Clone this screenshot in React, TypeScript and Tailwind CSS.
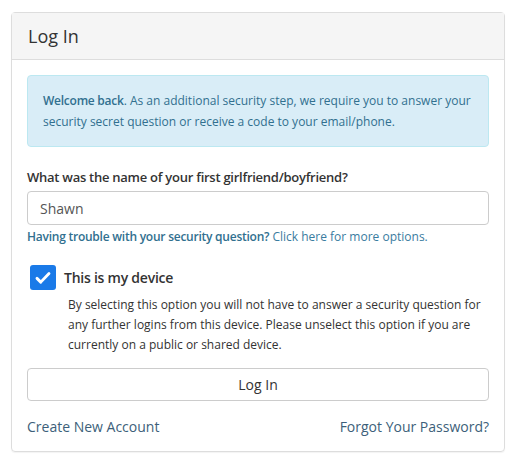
export default function App() {
  return (
    <div className="min-h-screen bg-white pt-[12px] pl-[11px] font-['Open_Sans',sans-serif] text-[#333]">
      <div className="w-[494px] rounded-[4px] border border-[#ddd] shadow-[0_1px_1px_rgba(0,0,0,0.05)]">
        <div className="flex h-[47px] items-center border-b border-[#ddd] bg-[#f5f5f5] px-[16px] text-[18px] text-[#333]">
          Log In
        </div>
        <div className="px-[15px] pt-[15px] pb-[14px]">
          <div className="rounded-[4px] border border-[#bce8f1] bg-[#d9edf7] pl-[15px] pr-[8px] py-[14px] text-[12px] leading-[21px] text-[#31708f]">
            <b className="font-semibold tracking-[-0.25px]">Welcome back</b>. As an additional security step, we require you to answer your security
            secret question or receive a code to your email/phone.
          </div>

          <label className="mt-[21px] block text-[13px] font-semibold leading-[18px] tracking-[-0.26px] text-[#333]">
            What was the name of your first girlfriend/boyfriend?
          </label>
          <input
            defaultValue="Shawn"
            className="mt-[5px] block h-[34px] w-full rounded-[4px] border border-[#ccc] px-[12px] text-[14px] text-[#555] outline-none"
          />
          <p className="mt-[3px] text-[12px] leading-[18px] text-[#31708f]">
            <span className="font-semibold tracking-[-0.24px]">Having trouble with your security question?</span>{' '}
            <a className="text-[#3a7ca0]">Click here for more options.</a>
          </p>

          <div className="mt-[19px] flex items-center gap-[8px] pl-[3px]">
            <span className="flex h-[25px] w-[26px] items-center justify-center rounded-[3px] bg-[#1a7ae8]">
              <svg width="18" height="18" viewBox="0 0 24 24" fill="none" stroke="white" strokeWidth="3.8" strokeLinecap="round" strokeLinejoin="round">
                <path d="M4 12.5l5 5L20 6" />
              </svg>
            </span>
            <span className="text-[14px] font-semibold tracking-[-0.24px] text-[#333]">This is my device</span>
          </div>
          <p className="mt-[5px] pl-[41px] pr-[8px] text-[12px] leading-[20px] text-[#333]">
            By selecting this option you will not have to answer a security question for any further logins from this
            device. Please unselect this option if you are currently on a public or shared device.
          </p>

          <button className="mt-[13px] block h-[33px] w-full rounded-[4px] border border-[#ccc] bg-white text-[14px] text-[#333]">
            Log In
          </button>

          <div className="mt-[16px] flex justify-between text-[14px] leading-[20px] text-[#3d5f7a]">
            <a>Create New Account</a>
            <a>Forgot Your Password?</a>
          </div>
        </div>
      </div>
    </div>
  );
}
